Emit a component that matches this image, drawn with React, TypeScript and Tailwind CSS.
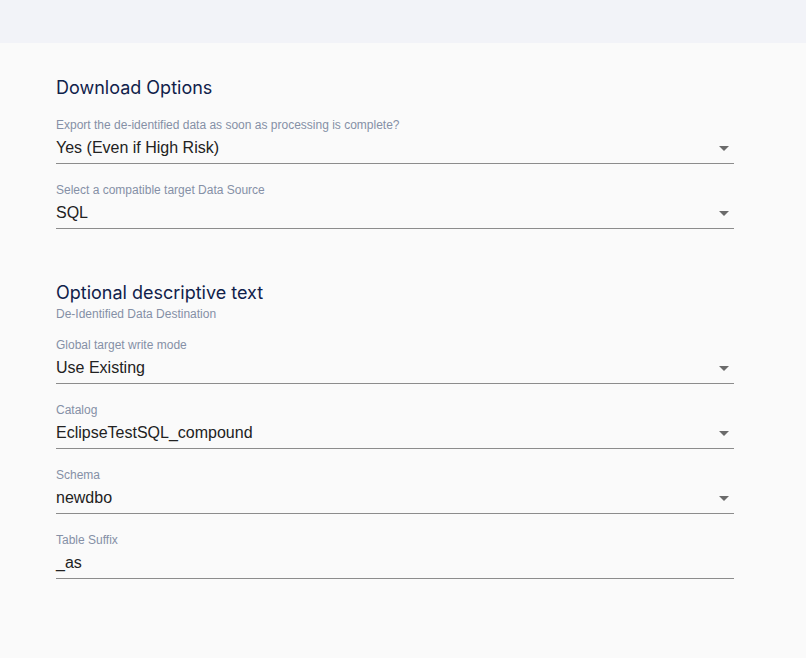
const fields1 = [
  { label: "Export the de-identified data as soon as processing is complete?", value: "Yes (Even if High Risk)", select: true },
  { label: "Select a compatible target Data Source", value: "SQL", select: true },
]

const fields2 = [
  { label: "Global target write mode", value: "Use Existing", select: true },
  { label: "Catalog", value: "EclipseTestSQL_compound", select: true },
  { label: "Schema", value: "newdbo", select: true },
  { label: "Table Suffix", value: "_as", select: false },
]

function Field({ label, value, select }: { label: string; value: string; select: boolean }) {
  return (
    <div className="mt-[18px] first:mt-0">
      <div className="h-4 text-xs leading-4 text-[#8590a6]">{label}</div>
      <div className="flex h-[31px] items-center justify-between border-b border-[#8c8c8c] text-base text-[#222]">
        <span>{value}</span>
        {select && (
          <svg width="10" height="5" viewBox="0 0 10 5" className="mr-[5px]">
            <path d="M0 0h10L5 5z" fill="#6b6b6b" />
          </svg>
        )}
      </div>
    </div>
  )
}

export default function App() {
  return (
    <div className="min-h-[658px] bg-[#fafafa] font-['Liberation_Sans',Arial,sans-serif]">
      <div className="h-[43px] bg-[#f2f3f8]" />
      <div className="ml-14 w-[678px] pt-[33px]">
        <h2 className="font-['Inter',sans-serif] text-lg leading-6 text-[#10214a]">Download Options</h2>
        <div className="mt-[17px]">
          {fields1.map((f) => (
            <Field key={f.label} {...f} />
          ))}
        </div>

        <h2 className="mt-[52px] mb-px font-['Inter',sans-serif] text-lg leading-6 text-[#10214a]">
          Optional descriptive text
        </h2>
        <div className="text-xs leading-4 text-[#8590a6]">De-Identified Data Destination</div>
        <div className="mt-[15px]">
          {fields2.map((f) => (
            <Field key={f.label} {...f} />
          ))}
        </div>
      </div>
    </div>
  )
}
